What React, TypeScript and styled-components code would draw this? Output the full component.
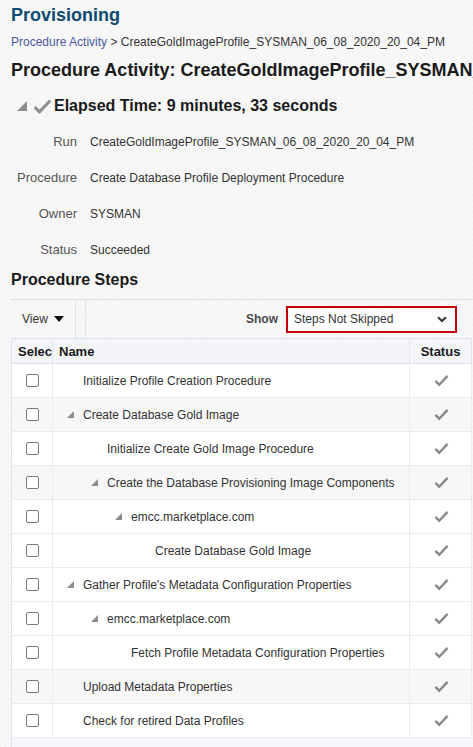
import React from 'react';
import styled, { createGlobalStyle } from 'styled-components';

const GlobalStyle = createGlobalStyle`
  html, body {
    margin: 0;
    padding: 0;
  }
  body {
    font-family: "Liberation Sans", Arial, sans-serif;
    color: #333;
    background-color: #f8f8f8;
    background-image: repeating-linear-gradient(
      45deg,
      rgba(0, 0, 0, 0.018) 0px,
      rgba(0, 0, 0, 0.018) 1px,
      transparent 1px,
      transparent 4px
    );
  }
`;

const Page = styled.div`
  width: 473px;
  height: 747px;
  overflow: hidden;
  padding-left: 11px;
  box-sizing: border-box;
`;

const Title = styled.h1`
  margin: 0;
  padding-top: 4px;
  font-size: 18px;
  line-height: 22px;
  font-weight: bold;
  color: #0f4b70;
`;

const Breadcrumb = styled.div`
  margin-top: 9px;
  font-size: 12px;
  line-height: 14px;
  color: #333;
  white-space: nowrap;

  a {
    color: #4b5aa0;
    text-decoration: none;
  }
`;

const Heading = styled.h2`
  margin: 10px 0 0;
  font-size: 18px;
  line-height: 22px;
  font-weight: bold;
  color: #1a1a1a;
  white-space: nowrap;
`;

const ElapsedRow = styled.div`
  display: flex;
  align-items: center;
  margin-top: 15px;
  padding-left: 6px;
  gap: 6px;
`;

const ElapsedText = styled.span`
  margin-left: -4px;
  font-size: 16px;
  line-height: 20px;
  font-weight: bold;
  color: #1a1a1a;
  white-space: nowrap;
`;

const Details = styled.div`
  display: grid;
  grid-template-columns: 66px auto;
  column-gap: 13px;
  row-gap: 22px;
  margin-top: 19px;
  line-height: 14px;
`;

const Label = styled.div`
  text-align: right;
  font-size: 13px;
  color: #555;
`;

const Value = styled.div`
  font-size: 12px;
  color: #333;
  white-space: nowrap;
`;

const SectionTitle = styled.h3`
  margin: 14px 0 0;
  font-size: 16px;
  line-height: 18px;
  font-weight: bold;
  color: #1a1a1a;
`;

const Toolbar = styled.div`
  display: flex;
  align-items: stretch;
  height: 38px;
  margin-top: 10px;
  border-top: 1px solid #dde3ea;
`;

const ViewMenu = styled.div`
  display: flex;
  align-items: center;
  gap: 6px;
  width: 65px;
  padding-left: 11px;
  box-sizing: border-box;
  font-size: 12px;
  color: #333;
  border-right: 1px solid #dde3ea;
`;

const Spacer = styled.div`
  width: 9px;
  border-right: 1px solid #dde3ea;
`;

const ShowGroup = styled.div`
  flex: 1;
  display: flex;
  align-items: center;
  justify-content: flex-end;
  gap: 8px;
  padding-right: 16px;
`;

const ShowLabel = styled.span`
  font-size: 12px;
  font-weight: bold;
  color: #4a4a4a;
`;

const SelectBox = styled.div`
  display: flex;
  align-items: center;
  justify-content: space-between;
  width: 171px;
  height: 27px;
  box-sizing: border-box;
  padding: 0 8px 0 6px;
  border: 2px solid #c4000b;
  background: #fff;
  font-size: 12px;
  color: #333;
`;

const TableWrap = styled.div`
  width: 460px;
  height: 420px;
  background: #f5f7fb;
  border-left: 1px solid #dde3ea;
  border-top: 1px solid #dde3ea;
`;

const Table = styled.div`
  display: grid;
  grid-template-columns: 41px 1fr 62px;
  background: #fff;
`;

const HeadCell = styled.div<{ $center?: boolean }>`
  height: 24px;
  display: flex;
  align-items: center;
  justify-content: ${p => (p.$center ? 'center' : 'flex-start')};
  padding-left: ${p => (p.$center ? 0 : 6)}px;
  overflow: hidden;
  white-space: nowrap;
  background: #f3f5f8;
  font-size: 13px;
  font-weight: bold;
  color: #1a1a1a;
  border-bottom: 1px solid #dde3ea;
  border-right: 1px solid #e4e8ed;
`;

const Cell = styled.div<{ $shaded?: boolean }>`
  height: 33px;
  display: flex;
  align-items: center;
  background: ${p => (p.$shaded ? '#f7f7f7' : '#fff')};
  border-bottom: 1px solid #e9ecef;
  border-right: 1px solid #e9ecef;
  font-size: 12px;
  color: #333;
  white-space: nowrap;
`;

const CheckCell = styled(Cell)`
  justify-content: center;
  padding-left: 1px;
`;

const NameCell = styled(Cell)<{ $level: number }>`
  padding-left: ${p => 14 + p.$level * 24}px;
`;

const StatusCell = styled(Cell)`
  justify-content: center;
  padding-left: 1px;
`;

const Checkbox = styled.span`
  display: inline-block;
  width: 11px;
  height: 11px;
  border: 1px solid #7a7a7a;
  border-radius: 2px;
  background: #fff;
`;

const Twisty = styled.span`
  display: inline-flex;
  width: 16px;
  align-items: center;
`;

const Expander = ({ size = 7 }: { size?: number }) => (
  <svg width={size} height={size} viewBox="0 0 7 7">
    <polygon points="7,0 7,7 0,7" fill="#8c8c8c" />
  </svg>
);

const Check = ({ size = 15, color = '#8a8a8a' }: { size?: number; color?: string }) => (
  <svg width={size} height={size} viewBox="0 0 16 16">
    <path d="M1.5 8.5 L5.5 12.5 L14.5 3" fill="none" stroke={color} strokeWidth="2.6" strokeLinejoin="miter" />
  </svg>
);

const CaretDown = () => (
  <svg width="10" height="6" viewBox="0 0 10 6">
    <polygon points="0,0 10,0 5,6" fill="#111" />
  </svg>
);

const Chevron = () => (
  <svg width="10" height="7" viewBox="0 0 10 7">
    <path d="M1 1.2 L5 5 L9 1.2" fill="none" stroke="#333" strokeWidth="2" />
  </svg>
);

type Step = { name: string; level: number; group?: boolean; shaded?: boolean };

const steps: Step[] = [
  { name: 'Initialize Profile Creation Procedure', level: 0 },
  { name: 'Create Database Gold Image', level: 0, group: true, shaded: true },
  { name: 'Initialize Create Gold Image Procedure', level: 1 },
  { name: 'Create the Database Provisioning Image Components', level: 1, group: true, shaded: true },
  { name: 'emcc.marketplace.com', level: 2, group: true },
  { name: 'Create Database Gold Image', level: 3 },
  { name: "Gather Profile's Metadata Configuration Properties", level: 0, group: true },
  { name: 'emcc.marketplace.com', level: 1, group: true },
  { name: 'Fetch Profile Metadata Configuration Properties', level: 2 },
  { name: 'Upload Metadata Properties', level: 0, shaded: true },
  { name: 'Check for retired Data Profiles', level: 0 },
];

const details = [
  ['Run', 'CreateGoldImageProfile_SYSMAN_06_08_2020_20_04_PM'],
  ['Procedure', 'Create Database Profile Deployment Procedure'],
  ['Owner', 'SYSMAN'],
  ['Status', 'Succeeded'],
];

export default function App() {
  return (
    <Page>
      <GlobalStyle />
      <Title>Provisioning</Title>
      <Breadcrumb>
        <a href="#">Procedure Activity</a> &gt; CreateGoldImageProfile_SYSMAN_06_08_2020_20_04_PM
      </Breadcrumb>
      <Heading>Procedure Activity: CreateGoldImageProfile_SYSMAN_06_08_2020_20_04_PM</Heading>

      <ElapsedRow>
        <Expander size={10} />
        <Check size={19} color="#8f8f8f" />
        <ElapsedText>Elapsed Time: 9 minutes, 33 seconds</ElapsedText>
      </ElapsedRow>

      <Details>
        {details.map(([k, v]) => (
          <React.Fragment key={k}>
            <Label>{k}</Label>
            <Value>{v}</Value>
          </React.Fragment>
        ))}
      </Details>

      <SectionTitle>Procedure Steps</SectionTitle>
      <Toolbar>
        <ViewMenu>
          View <CaretDown />
        </ViewMenu>
        <Spacer />
        <ShowGroup>
          <ShowLabel>Show</ShowLabel>
          <SelectBox>
            Steps Not Skipped
            <Chevron />
          </SelectBox>
        </ShowGroup>
      </Toolbar>

      <TableWrap>
        <Table>
          <HeadCell>Select</HeadCell>
          <HeadCell>Name</HeadCell>
          <HeadCell $center>Status</HeadCell>
          {steps.map((s, i) => (
            <React.Fragment key={i}>
              <CheckCell $shaded={s.shaded}>
                <Checkbox />
              </CheckCell>
              <NameCell $shaded={s.shaded} $level={s.level}>
                <Twisty>{s.group && <Expander />}</Twisty>
                {s.name}
              </NameCell>
              <StatusCell $shaded={s.shaded}>
                <Check />
              </StatusCell>
            </React.Fragment>
          ))}
        </Table>
      </TableWrap>
    </Page>
  );
}
